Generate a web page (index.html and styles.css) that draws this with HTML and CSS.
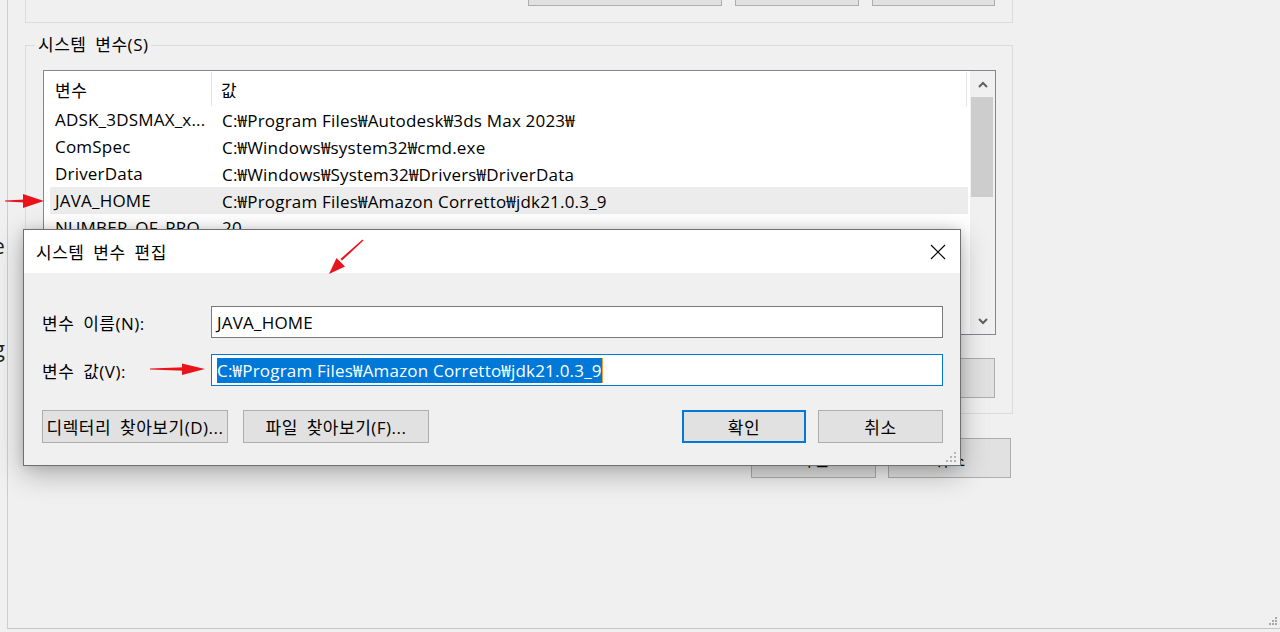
FILE: index.html
```html
<!DOCTYPE html>
<html lang="ko">
<head>
<meta charset="utf-8">
<title>시스템 변수 편집</title>
<link rel="stylesheet" href="styles.css">
</head>
<body>
<div class="desk">
  <div class="peek">
    <span class="peek-e">e</span>
    <span class="peek-g">g</span>
  </div>
  <div class="env">
    <div class="user-group">
      <div class="wbtn tb w194"></div>
      <div class="wbtn tb w124"></div>
      <div class="wbtn tb w123"></div>
    </div>
    <fieldset class="sys-group">
      <legend class="ko">시스템 변수(S)</legend>
      <div class="list">
        <div class="list-main">
          <div class="lv-head">
            <div class="h1 ko">변수</div>
            <div class="h2 ko">값</div>
          </div>
          <div class="lv-row"><div class="c1">ADSK_3DSMAX_x...</div><div class="c2">C:₩Program Files₩Autodesk₩3ds Max 2023₩</div></div>
          <div class="lv-row"><div class="c1">ComSpec</div><div class="c2">C:₩Windows₩system32₩cmd.exe</div></div>
          <div class="lv-row"><div class="c1">DriverData</div><div class="c2">C:₩Windows₩System32₩Drivers₩DriverData</div></div>
          <div class="lv-row sel"><div class="c1">JAVA_HOME</div><div class="c2">C:₩Program Files₩Amazon Corretto₩jdk21.0.3_9</div></div>
          <div class="lv-row"><div class="c1">NUMBER_OF_PRO...</div><div class="c2">20</div></div>
          <div class="lv-row"><div class="c1">OS</div><div class="c2">Windows_NT</div></div>
          <div class="lv-row"><div class="c1">Path</div><div class="c2">C:₩Program Files₩Common Files₩Oracle₩Java₩javapath</div></div>
          <div class="lv-row"><div class="c1">PATHEXT</div><div class="c2">.COM;.EXE;.BAT;.CMD;.VBS;.VBE;.JS;.JSE;.WSF;.WSH;.MSC</div></div>
        </div>
        <div class="vscroll">
          <div class="sb-btn">
            <svg width="10" height="7" viewBox="0 0 10 7"><polyline points="1,6 5,2 9,6" fill="none" stroke="#606060" stroke-width="2"/></svg>
          </div>
          <div class="sb-thumb"></div>
          <div class="sb-track"></div>
          <div class="sb-btn">
            <svg width="10" height="7" viewBox="0 0 10 7"><polyline points="1,1 5,5 9,1" fill="none" stroke="#606060" stroke-width="2"/></svg>
          </div>
        </div>
      </div>
      <div class="sys-btns">
        <button class="wbtn ko w194">새로 만들기(W)...</button>
        <button class="wbtn ko w124">편집(I)...</button>
        <button class="wbtn ko w123">삭제(L)</button>
      </div>
    </fieldset>
    <div class="env-btns">
      <button class="wbtn ko w125">확인</button>
      <button class="wbtn ko w123">취소</button>
    </div>
    <div class="env-foot">
      <svg class="grip" width="10" height="10" viewBox="0 0 10 10">
        <rect x="7" y="1" width="2" height="2" fill="#a8a8a8"/>
        <rect x="4" y="4" width="2" height="2" fill="#a8a8a8"/>
        <rect x="7" y="4" width="2" height="2" fill="#a8a8a8"/>
        <rect x="1" y="7" width="2" height="2" fill="#a8a8a8"/>
        <rect x="4" y="7" width="2" height="2" fill="#a8a8a8"/>
        <rect x="7" y="7" width="2" height="2" fill="#a8a8a8"/>
      </svg>
    </div>
  </div>

  <div class="dialog">
    <div class="dlg-title">
      <span class="dlg-caption ko">시스템 변수 편집</span>
      <span class="dlg-close">
        <svg width="16" height="16" viewBox="0 0 16 16"><path d="M1 1 L15 15 M15 1 L1 15" stroke="#000" stroke-width="1.1" fill="none"/></svg>
      </span>
    </div>
    <div class="dlg-body">
      <div class="fields">
        <label class="flabel ko">변수 이름(N):</label>
        <div class="field">JAVA_HOME</div>
        <label class="flabel ko">변수 값(V):</label>
        <div class="field focus"><span class="selected">C:₩Program Files₩Amazon Corretto₩jdk21.0.3_9</span></div>
      </div>
      <div class="dlg-btns">
        <div class="grp">
          <button class="wbtn ko dbtn w186">디렉터리 찾아보기(D)...</button>
          <button class="wbtn ko dbtn w186">파일 찾아보기(F)...</button>
        </div>
        <div class="grp grp-r">
          <button class="wbtn ko dbtn w124 default">확인</button>
          <button class="wbtn ko dbtn w125">취소</button>
        </div>
      </div>
      <div class="dlg-foot">
        <svg class="grip" width="12" height="12" viewBox="0 0 12 12">
          <rect x="9" y="1" width="2" height="2" fill="#b4b4b4"/>
          <rect x="5" y="5" width="2" height="2" fill="#b4b4b4"/>
          <rect x="9" y="5" width="2" height="2" fill="#b4b4b4"/>
          <rect x="1" y="9" width="2" height="2" fill="#b4b4b4"/>
          <rect x="5" y="9" width="2" height="2" fill="#b4b4b4"/>
          <rect x="9" y="9" width="2" height="2" fill="#b4b4b4"/>
        </svg>
      </div>
    </div>
  </div>

  <svg class="marks" width="1280" height="632" viewBox="0 0 1280 632">
    <g fill="#e8141c">
      <polygon points="5,200.5 25,199.5 25,202.5 5,201.5"/>
      <polygon points="23,194 44,201 23,208"/>
      <polygon points="363.5,240.5 342,260.6 340.4,259 362.5,239.5"/>
      <polygon points="345,266.5 329,274 336.5,258"/>
      <polygon points="150,368.5 184,367.3 184,370.7 150,369.5"/>
      <polygon points="182,363.5 205,369 182,375"/>
    </g>
  </svg>
</div>
</body>
</html>
```

FILE: styles.css
```css
* { box-sizing: border-box; }
html, body { margin: 0; padding: 0; }
body {
  width: 1280px;
  height: 632px;
  overflow: hidden;
  background: #f0f0f0;
  font-family: "Open Sans", "Noto Sans CJK KR", sans-serif;
  font-size: 17px;
  letter-spacing: 0.2px;
  color: #000;
}
button { font: inherit; color: inherit; margin: 0; }

/* Korean UI strings: Malgun Gothic sets Hangul a little looser */
.ko {
  letter-spacing: 0.5px;
  word-spacing: 4px;
}

.desk {
  position: relative;
  display: flex;
  height: 632px;
}

/* sliver of a window at the far left */
.peek {
  width: 7px;
  overflow: hidden;
  display: flex;
  flex-direction: column;
  align-items: flex-end;
}
.peek span {
  font-size: 21px;
  line-height: 1;
  color: #222;
  margin-right: 2px;
}
.peek-e { margin-top: 236px; }
.peek-g { margin-top: 82px; }

/* environment variables window (background) */
.env {
  width: 1273px;
  height: 629px;
  border-left: 1px solid #cdcdcd;
  border-bottom: 1px solid #c6c6c6;
  padding-left: 17px;
  display: flex;
  flex-direction: column;
}

.wbtn {
  background: #e1e1e1;
  border: 1px solid #adadad;
  padding: 0;
}
.w194 { width: 194px; }
.w124 { width: 124px; }
.w123 { width: 123px; }
.w125 { width: 125px; }
.w186 { width: 186px; }

.user-group {
  width: 988px;
  height: 23px;
  border: 1px solid #dcdcdc;
  border-top: none;
  display: flex;
  justify-content: flex-end;
  align-items: flex-start;
  gap: 13px;
  padding-right: 17px;
  flex: none;
}
.tb {
  height: 6px;
  border-top: none;
}

.sys-group {
  width: 988px;
  margin: 11px 0 0 0;
  padding: 14px 16px 15px 17px;
  border: 1px solid #dcdcdc;
  min-width: 0;
  flex: none;
}
.sys-group legend {
  padding: 0 3px;
  margin-left: -8px;
  line-height: 22px;
}

.list {
  height: 265px;
  border: 1px solid #828790;
  background: #fff;
  display: flex;
}
.list-main {
  flex: 1;
  overflow: hidden;
}
.lv-head {
  display: flex;
  height: 35px;
}
.lv-head .h1,
.lv-head .h2 {
  display: flex;
  align-items: center;
  border-right: 1px solid #e5e5e5;
  margin-top: 1px;
}
.lv-head .h1 { width: 168px; padding-left: 11px; }
.lv-head .h2 { width: 755px; padding-left: 9px; }

.lv-row {
  display: flex;
  align-items: center;
  height: 27px;
  margin-left: 6px;
  width: 918px;
  white-space: nowrap;
}
.lv-row .c1 { width: 162px; padding-left: 5px; overflow: hidden; flex: none; }
.lv-row .c2 { padding-left: 10px; }
.lv-row.sel { background: #ececec; }

.vscroll {
  width: 25px;
  background: #f0f0f0;
  display: flex;
  flex-direction: column;
}
.sb-btn {
  height: 26px;
  display: flex;
  align-items: center;
  justify-content: center;
  flex: none;
}
.sb-thumb {
  height: 100px;
  margin: 0 2px 0 1px;
  background: #cdcdcd;
  flex: none;
}
.sb-track { flex: 1; }

.sys-btns {
  display: flex;
  justify-content: flex-end;
  gap: 13px;
  margin-top: 23px;
  padding-right: 1px;
}
.sys-btns .wbtn { height: 40px; }

.env-btns {
  width: 988px;
  display: flex;
  justify-content: flex-end;
  gap: 12px;
  margin-top: 24px;
  padding-right: 2px;
  flex: none;
}
.env-btns .wbtn { height: 40px; }

.env-foot {
  margin-top: auto;
  display: flex;
  justify-content: flex-end;
  padding: 0 2px 2px 0;
}

/* edit dialog (on top) */
.dialog {
  position: absolute;
  left: 23px;
  top: 229px;
  width: 938px;
  height: 237px;
  border: 1px solid #6f6f6f;
  background: #f0f0f0;
  box-shadow: 0 8px 26px rgba(0, 0, 0, 0.28), 0 0 10px rgba(0, 0, 0, 0.12);
  display: flex;
  flex-direction: column;
}
.dlg-title {
  height: 43px;
  background: #fff;
  display: flex;
  align-items: center;
  justify-content: space-between;
  padding-left: 12px;
  flex: none;
}
.dlg-close {
  width: 44px;
  height: 43px;
  display: flex;
  align-items: center;
  justify-content: center;
}
.dlg-body {
  flex: 1;
  display: flex;
  flex-direction: column;
  padding: 33px 17px 0 18px;
}
.fields {
  display: grid;
  grid-template-columns: 169px 1fr;
  row-gap: 16px;
  align-items: center;
}
.flabel { white-space: nowrap; }
.field {
  height: 32px;
  border: 1px solid #7a7a7a;
  background: #fff;
  padding-left: 5px;
  display: flex;
  align-items: center;
  white-space: nowrap;
}
.field.focus { border-color: #0078d7; }
.selected {
  background: #0078d7;
  color: #fff;
  line-height: 25px;
  border-right: 1px solid #f0a030;
}
.dlg-btns {
  display: flex;
  justify-content: space-between;
  margin-top: 24px;
}
.grp { display: flex; gap: 15px; }
.grp-r { gap: 12px; }
.dbtn { height: 33px; white-space: nowrap; }
.dbtn.default { border: 2px solid #0078d7; }
.dlg-foot {
  margin-top: auto;
  display: flex;
  justify-content: flex-end;
  margin-right: -14px;
  padding-bottom: 2px;
}

.marks {
  position: absolute;
  left: 0;
  top: 0;
  pointer-events: none;
}
```
